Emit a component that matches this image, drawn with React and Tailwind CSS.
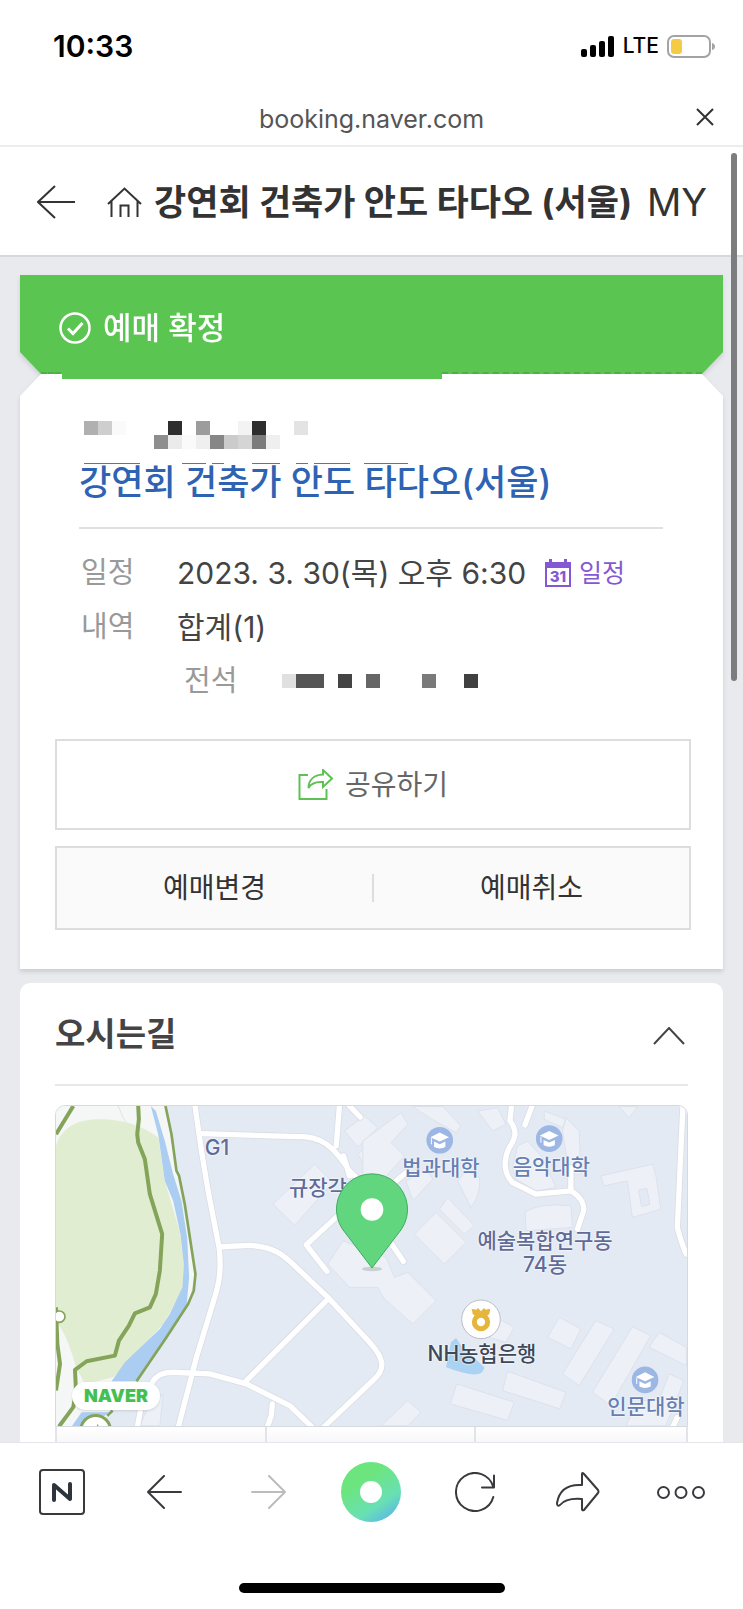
const GRAD_ICONS = [
  { x: 1171, y: 148 },
  { x: 1500, y: 143 },
  { x: 1788, y: 868 },
];

const MAP_LABELS = [
  { text: 'G1', className: 'left-[25.5%] top-[13%] text-[#5f6b99]' },
  { text: '규장각', className: 'left-[41.5%] top-[25.5%] text-[#5f6b99]' },
  { text: '법과대학', className: 'left-[61%] top-[19.5%] text-[#6680b3]' },
  { text: '음악대학', className: 'left-[78.5%] top-[19%] text-[#6680b3]' },
  { text: '예술복합연구동', className: 'left-[77.5%] top-[42%] text-[#5f6b99]' },
  { text: '74동', className: 'left-[77.5%] top-[49.5%] text-[#5f6b99]' },
  { text: 'NH농협은행', className: 'left-[67.5%] top-[77.5%] text-[#3c4858]' },
  { text: '인문대학', className: 'left-[93.5%] top-[94%] text-[#6680b3]' },
];

// null keeps the cell empty
const NAME_MOSAIC = [
  ['bg-[#b0b0b0]', 'bg-[#cecece]', 'bg-[#fafafa]', null, null, null, 'bg-[#2e2e2e]', null, 'bg-[#9c9c9c]', null, null, 'bg-[#f3f3f3]', 'bg-[#2e2e2e]', null, null, 'bg-[#e3e3e3]'],
  [null, null, null, null, null, 'bg-[#8e8e8e]', 'bg-[#ebebeb]', 'bg-[#fafafa]', 'bg-[#efefef]', 'bg-[#868686]', 'bg-[#cbcbcb]', 'bg-[#d5d5d5]', 'bg-[#7c7c7c]', 'bg-[#efefef]', null, null],
];

const SEAT_MOSAIC = [
  ['bg-[#e0e0e0]', 'bg-[#555555]', 'bg-[#555555]', null, 'bg-[#444444]', null, 'bg-[#666666]', null, null, null, 'bg-[#7a7a7a]', null, null, 'bg-[#404040]'],
];

const Mosaic = ({ rows }) => (
  <div aria-hidden="true">
    {rows.map((row, i) => (
      <div key={i} className="flex">
        {row.map((cell, j) => (
          <span key={j} className={`h-[14px] w-[14px] ${cell || ''}`} />
        ))}
      </div>
    ))}
  </div>
);

const StatusBar = () => (
  <div className="flex h-[92px] items-center justify-between pl-[53px] pr-[28px]">
    <time className="text-[30px] leading-8 font-semibold text-black">10:33</time>
    <div className="flex items-center gap-2">
      <svg className="h-[21px] w-[34px]" viewBox="0 0 34 21" aria-hidden="true">
        <rect x="0" y="13" width="6" height="8" rx="2" />
        <rect x="9" y="9" width="6" height="12" rx="2" />
        <rect x="18" y="5" width="6" height="16" rx="2" />
        <rect x="27" y="0" width="6" height="21" rx="2" />
      </svg>
      <span className="text-[21px] leading-8 font-medium text-black">LTE</span>
      <svg className="h-[23px] w-12" viewBox="0 0 48 23" aria-hidden="true">
        <rect x="1" y="1" width="42" height="21" rx="6" fill="none" stroke="#a3a3a3" strokeWidth="2" />
        <rect x="4" y="4" width="11" height="15" rx="3" fill="#f3cb45" />
        <path d="M45 8 Q48 9 48 11.5 Q48 14 45 15Z" fill="#a3a3a3" />
      </svg>
    </div>
  </div>
);

const UrlBar = () => (
  <div className="grid h-[55px] grid-cols-[64px_1fr_64px] items-center border-b-2 border-[#ededed]">
    <p className="col-start-2 text-center text-[25px] leading-8 text-[#555555]">booking.naver.com</p>
    <button type="button" aria-label="닫기" className="flex h-full items-center justify-end pr-[29px] pb-1">
      <svg className="h-[18px] w-[18px]" viewBox="0 0 18 18" fill="none" stroke="#333" strokeWidth="2">
        <path d="M1 1 L17 17 M17 1 L1 17" />
      </svg>
    </button>
  </div>
);

const PageHeader = () => (
  <header className="flex h-[110px] items-center border-b-2 border-[#d6d8dc] pt-[2px] pl-[37px] pr-[36px] text-[#333333]">
    <button type="button" aria-label="뒤로" className="mr-8 shrink-0">
      <svg className="h-[34px] w-[38px]" viewBox="0 0 38 34" fill="none" stroke="currentColor" strokeWidth="2">
        <path d="M18 1 L1 17 L18 33 M1 17 H38" />
      </svg>
    </button>
    <a href="#home" aria-label="홈" className="mr-3 shrink-0">
      <svg className="h-[30px] w-[35px]" viewBox="0 0 35 30" fill="none" stroke="currentColor" strokeWidth="2">
        <path d="M1 17 L17.5 1.5 L34 17 M4.5 14 V30 M30.5 14 V30 M13.5 30 V18.5 H21.5 V30" />
      </svg>
    </a>
    <h1 className="truncate text-[35px] leading-[48px] font-bold">강연회 건축가 안도 타다오 (서울)</h1>
    <a href="#my" className="ml-auto text-[38px] leading-[48px]">MY</a>
  </header>
);

const TicketCard = () => (
  <section className="drop-shadow-[0_3px_2px_rgba(120,124,135,0.25)]">
    <div className="relative flex h-[99px] items-center gap-3 bg-[#5bc551] pl-[39px] pt-[6px] text-white [clip-path:polygon(0_0,100%_0,100%_calc(100%-22px),calc(100%-21px)_100%,21px_100%,0_calc(100%-22px))]">
      <svg className="h-8 w-8" viewBox="0 0 32 32" fill="none" stroke="currentColor" strokeWidth="2.5">
        <circle cx="16" cy="16" r="14.5" />
        <path d="M9 16.5 L14 21.5 L23.5 11" strokeWidth="3" />
      </svg>
      <h2 className="text-[31px] leading-[44px] font-medium">예매 확정</h2>
      <span className="absolute left-[21px] bottom-0 w-5 border-b-2 border-dashed border-[#4fae46]" />
      <span className="absolute left-[60%] right-[21px] bottom-0 border-b-2 border-dashed border-[#4fae46]" />
    </div>

    <div className="relative bg-white pl-[35px] pr-8 pt-[47px] pb-[39px] [clip-path:polygon(21px_0,calc(100%-21px)_0,100%_22px,100%_100%,0_100%,0_22px)]">
      <span className="absolute left-[42px] right-[40%] top-0 h-[5px] bg-[#5bc551]" />
      <div className="pl-6 pr-7">
        <div className="pl-[5px]">
          <Mosaic rows={NAME_MOSAIC} />
        </div>
        <div className="mt-[14px] flex pl-[5px]" aria-hidden="true">
          <span className="mr-[42px] h-px w-14 bg-[#5078a8]" />
          <span className="mr-[6px] h-px w-6 bg-[#5078a8]" />
          <span className="mr-7 h-px w-3 bg-[#5078a8]" />
          <span className="mr-4 h-px w-7 bg-[#5078a8]" />
          <span className="mr-[6px] h-px w-3 bg-[#5078a8]" />
          <span className="mr-[14px] h-px w-9 bg-[#5078a8]" />
          <span className="h-px w-11 bg-[#5078a8]" />
        </div>
        <h3 className="border-b-2 border-[#e0e0e0] pb-[27px] text-[35px] leading-9 font-medium text-[#2e63b3]">
          강연회 건축가 안도 타다오(서울)
        </h3>

        <dl className="mt-[17px] text-[29px] leading-[54px] text-[#444444]">
          <div className="flex">
            <dt className="w-[98px] pl-[2px] text-[#999999]">일정</dt>
            <dd className="flex items-center gap-[19px] text-[30px]">
              2023. 3. 30(목) 오후 6:30
              <a href="#calendar" className="flex items-center gap-2 text-[25px] text-[#8558d3]">
                <svg className="h-[28px] w-[26px]" viewBox="0 0 26 28" aria-hidden="true">
                  <path d="M0 3 H4 V0 H7 V3 H19 V0 H22 V3 H26 V28 H0Z" fill="#8558d3" />
                  <rect x="2" y="9" width="22" height="17" fill="#fff" />
                  <text x="13" y="23" textAnchor="middle" fontSize="15" fontWeight="800" fill="#8558d3">31</text>
                </svg>
                일정
              </a>
            </dd>
          </div>
          <div className="flex">
            <dt className="w-[98px] pl-[2px] text-[#999999]">내역</dt>
            <dd className="text-[30px]">합계(1)</dd>
          </div>
          <div className="flex items-center pl-[105px]">
            <dt className="w-[98px] text-[#999999]">전석</dt>
            <dd>
              <Mosaic rows={SEAT_MOSAIC} />
            </dd>
          </div>
        </dl>
      </div>

      <button type="button" className="mt-[31px] flex h-[91px] w-full items-center justify-center gap-3 border-2 border-[#dddddd] text-[28px] leading-10 text-[#666666]">
        <svg className="h-8 w-[35px]" viewBox="0 0 35 32" fill="none" stroke="#5fc154" strokeWidth="2">
          <path d="M10 6 H1.5 V30 H28.5 V20" />
          <path d="M25 1 L34 9.5 L25 18 V13 C18 12.5 13 14 10.5 19 C10.5 11 16 6 25 5.5Z" />
        </svg>
        공유하기
      </button>
      <div className="mt-4 flex h-[84px] items-center border-2 border-[#dddddd] bg-[#fafafa] text-[28px] leading-10 text-[#333333]">
        <button type="button" className="h-full flex-1">예매변경</button>
        <span className="h-7 w-[2px] bg-[#dddddd]" />
        <button type="button" className="h-full flex-1">예매취소</button>
      </div>
    </div>
  </section>
);

const MapDrawing = () => (
  <svg className="block w-full" viewBox="18 45 1896 963" aria-hidden="true">
    <rect x="18" y="45" width="1896" height="963" fill="#e4eaf4" />

    {/* park and stream */}
    <path d="M18 45 H347 L380 240 437 550 415 640 260 872 172 975 140 1008 H18Z" fill="#f5f6f6" />
    <path d="M205 45 Q215 80 240 110" fill="none" stroke="#e0e2e4" strokeWidth="3" />
    <path d="M18 165 C35 110 80 85 150 85 C220 85 280 105 325 140 L345 270 392 430 402 520 398 600 340 700 190 860 L105 880 L78 830 C60 760 40 720 18 690Z" fill="#e1edd1" />
    <path d="M303 45 L325 130 345 270 370 330 392 430 402 520 398 590 360 670 330 715 225 815 185 872 H262 L330 770 410 650 418 560 412 440 395 330 370 250 345 150 318 60Z M65 1008 L95 965 H180 L150 985 100 1008Z" fill="#aacdf1" />
    <g fill="none" stroke="#84a45a" strokeWidth="12" strokeLinejoin="round">
      <path d="M265 45 L267 85 262 130 265 155 285 205 300 310 337 430 330 540 318 610 300 650 255 668 237 705 207 750 195 795 110 812 75 838 78 900 70 950 27 1008" />
      <path d="M70 45 L18 130 M18 650 L22 760 30 820 18 900" />
      <path d="M347 45 L365 130 380 240 388 255 405 340 437 550 432 600 415 640 350 740 260 872 M188 960 L172 976" strokeWidth="8" />
      <circle cx="28" cy="678" r="17" fill="#fff" strokeWidth="5" />
      <circle cx="137" cy="1020" r="45" fill="#fff" strokeWidth="9" />
      <path d="M143 1002 V1008" strokeWidth="4" />
    </g>

    {/* buildings */}
    <g fill="#edf1f7" stroke="#dce1ea" strokeWidth="3">
      <path d="M670 340 L795 220 850 275 735 403Z M885 120 L945 75 985 110 925 168Z M925 190 L990 130 1020 165 960 250Z" />
      <path d="M290 960 L340 910 330 1006 270 1006Z" />
      <path d="M835 520 L880 450 1010 500 1035 560 1075 545 1160 630 1090 700 1005 625 985 590 900 590Z" />
      <g transform="translate(960 0)">
        <path d="M-20 150 L95 65 115 100 65 155 105 195 20 290 -20 260Z M130 47 H220 L275 105 260 125 180 80Z" />
        <path d="M110 270 L170 235 190 265 130 330Z" />
        <path d="M135 430 L200 365 290 455 225 520Z M210 355 L235 320 315 405 285 430Z M265 270 L290 240 330 260 C335 300 320 330 305 350Z" />
        <path d="M468 365 C500 340 560 340 605 345 L610 410 470 420Z" />
        <path d="M695 255 L850 220 860 250 875 355 790 380 775 270 705 285Z" />
        <path d="M808 298 L833 292 843 340 818 348Z" fill="#e4eaf4" />
        <path d="M535 740 L570 680 635 715 605 775Z M580 850 L680 690 735 715 630 885Z M670 905 L790 708 845 735 725 945Z M840 770 L870 725 952 770 V825Z M770 1006 L810 930 H870 L900 850 945 870 890 1006Z" />
        <path d="M243 940 L262 880 435 935 415 990Z M400 900 L415 842 590 905 572 955Z M35 1006 L115 930 155 965 115 1006Z" />
        <path d="M325 60 L385 50 410 100 370 120Z M430 230 L445 165 475 150 520 200 560 290 500 300 440 265Z M590 80 L630 120 635 250 600 250 580 120Z M750 47 H805 L780 80Z M525 60 L590 85 580 110 525 85Z" />
        <path d="M380 680 L435 710 410 755 360 740Z" />
      </g>
    </g>
    <path d="M1190 830 L1205 755 1220 742 1235 765 1305 830 C1300 862 1260 855 1190 830Z" fill="#aad2f2" />

    {/* roads: casing first, then the white line on it */}
    {['#d9dde5', '#ffffff'].map((color, i) => (
      <g key={color} fill="none" stroke={color} strokeWidth={i === 0 ? 21 : 16} strokeLinejoin="round" strokeLinecap="round">
        <path d="M435 40 L455 180 475 300 508 470 C515 530 510 570 495 620 L440 800 385 1012" />
        <path d="M455 128 L770 138 C830 145 860 180 900 240 L960 300 M870 40 L860 165 M882 195 L900 255 M900 45 L932 78" />
        <path d="M515 468 L600 464 C670 468 700 490 740 530 L835 620 960 755 C1005 805 1010 835 970 870 L820 1012" />
        <path d="M835 625 L590 870 M262 1012 L275 940 C310 860 320 845 370 845 L480 850 590 880 720 945 790 1012 M668 940 L665 975 652 1012" />
        <path d="M870 370 L770 462 832 542 M1020 450 L1062 512 M1035 275 L1070 245" />
        <g transform="translate(960 0)">
          <path d="M427 40 L422 90 C445 120 440 140 420 170 C400 210 405 250 430 275 L500 310 605 300 C640 320 650 350 640 370 L625 415 M605 230 V300 M490 40 L467 102" />
          <path d="M942 40 L930 300 925 410 C935 450 940 465 952 490 M925 980 L910 1012" />
        </g>
      </g>
    ))}

    {GRAD_ICONS.map(({ x, y }) => (
      <g key={x} transform={`translate(${x} ${y})`}>
        <circle r="40" fill="#9cb7e4" />
        <path d="M-28 -9 L0 -23 28 -9 0 4Z M-17 4 L0 12 17 4 V20 Q0 29 -17 20Z" fill="#fff" />
        <path d="M-25 -6 V12" stroke="#fff" strokeWidth="3" />
      </g>
    ))}

    <g transform="translate(1295 686)">
      <circle r="58" fill="#fff" stroke="#b9bcc4" strokeWidth="3" />
      <circle cy="8" r="20" fill="none" stroke="#e5b53c" strokeWidth="15" />
      <path d="M-28 -32 L-14 -29 -9 -34 0 -24 9 -34 14 -29 28 -32 25 -16 14 -8 H-14 L-25 -16Z" fill="#e5b53c" />
    </g>
  </svg>
);

const PlaceMarker = () => (
  <svg className="absolute left-1/2 top-[21%] w-[12%] -translate-x-1/2" viewBox="851 245 228 300" aria-hidden="true">
    <ellipse cx="965" cy="534" rx="30" ry="7" fill="#9fb3a8" opacity="0.5" />
    <path d="M965 531 L876 414 A107 107 0 1 1 1054 414Z" fill="#62d67f" stroke="#3fab5e" strokeWidth="3" />
    <circle cx="965" cy="355" r="34" fill="#fff" />
  </svg>
);

const DirectionsCard = () => (
  <section className="mt-[14px] rounded-t-[10px] bg-white px-[35px]">
    <div className="flex h-[103px] items-center justify-between border-b-2 border-[#e8e8e8] pr-[3px]">
      <h2 className="text-[33px] leading-[48px] font-bold text-[#444444]">오시는길</h2>
      <button type="button" aria-label="접기" className="pt-[5px]">
        <svg className="h-[18px] w-8" viewBox="0 0 32 18" fill="none" stroke="#444" strokeWidth="2">
          <path d="M1 17 L16 1 L31 17" />
        </svg>
      </button>
    </div>
    <div className="relative mt-[19px] overflow-hidden rounded-t-[10px] border border-[#d5d9e0]">
      <MapDrawing />
      {MAP_LABELS.map(({ text, className }) => (
        <span
          key={text}
          className={`absolute -translate-x-1/2 -translate-y-1/2 text-[21px] leading-6 font-medium whitespace-nowrap [text-shadow:0_0_2px_#fff,0_0_2px_#fff] ${className}`}
        >
          {text}
        </span>
      ))}
      <PlaceMarker />
      <span className="absolute left-4 bottom-4 rounded-full bg-white px-3 py-[2px] text-[18px] leading-6 font-black text-[#43c050] shadow-sm">
        NAVER
      </span>
    </div>
    <div className="grid h-[15px] grid-cols-3 divide-x-2 divide-[#e3e4e8] border-x-2 border-[#e3e4e8] bg-linear-to-b from-white to-[#f8f8fa]">
      <span />
      <span />
      <span />
    </div>
  </section>
);

const BottomBar = () => (
  <nav className="border-t border-[#e6e6ea] bg-white">
    <div className="grid h-[98px] grid-cols-7 place-items-center px-[10px] text-[#3a3a3e]">
      <button type="button" aria-label="네이버 홈">
        <svg className="h-[46px] w-[46px]" viewBox="0 0 46 46" fill="none" stroke="currentColor" strokeWidth="2">
          <rect x="1" y="1" width="44" height="44" rx="3" />
          <path d="M15 31 V16 L31 30 V15" stroke="#2d343c" strokeWidth="4" strokeLinejoin="round" strokeLinecap="round" />
        </svg>
      </button>
      <button type="button" aria-label="이전">
        <svg className="h-[34px] w-[35px]" viewBox="0 0 35 34" fill="none" stroke="currentColor" strokeWidth="2" strokeLinecap="round" strokeLinejoin="round">
          <path d="M17 1 L1 17 L17 33 M1 17 H34" />
        </svg>
      </button>
      <button type="button" aria-label="다음" className="text-[#bcbcbc]">
        <svg className="h-[34px] w-[35px]" viewBox="0 0 35 34" fill="none" stroke="currentColor" strokeWidth="2" strokeLinecap="round" strokeLinejoin="round">
          <path d="M18 1 L34 17 L18 33 M34 17 H1" />
        </svg>
      </button>
      <button type="button" aria-label="그린닷">
        <svg className="h-[60px] w-[60px]" viewBox="0 0 60 60">
          <defs>
            <linearGradient id="dot" x1="0.25" y1="0.05" x2="0.85" y2="0.95">
              <stop offset="0.25" stopColor="#6ce57f" />
              <stop offset="0.7" stopColor="#69e0b4" />
              <stop offset="1" stopColor="#5cb6e6" />
            </linearGradient>
          </defs>
          <circle cx="30" cy="30" r="30" fill="url(#dot)" />
          <circle cx="30" cy="30" r="11" fill="#fff" />
        </svg>
      </button>
      <button type="button" aria-label="새로고침">
        <svg className="h-10 w-10" viewBox="0 0 40 40" fill="none" stroke="currentColor" strokeWidth="2" strokeLinecap="round" strokeLinejoin="round">
          <path d="M38.3 25 A19 19 0 1 1 38.3 15 M39 3.5 V15.5 H27" />
        </svg>
      </button>
      <button type="button" aria-label="공유">
        <svg className="h-10 w-11" viewBox="0 0 44 40" fill="none" stroke="currentColor" strokeWidth="2" strokeLinecap="round" strokeLinejoin="round">
          <path d="M26 2 Q26 0 28 2 L42 18 Q43 20 42 21 L28 38 Q26 39 26 37 V27 C14 26 8 28 4 33 Q1 35 1 31 C3 19 11 12 26 13Z" />
        </svg>
      </button>
      <button type="button" aria-label="더보기">
        <svg className="h-[13px] w-12" viewBox="0 0 48 13" fill="none" stroke="currentColor" strokeWidth="2">
          <circle cx="6.5" cy="6.5" r="5.5" />
          <circle cx="24" cy="6.5" r="5.5" />
          <circle cx="41.5" cy="6.5" r="5.5" />
        </svg>
      </button>
    </div>
    <div className="flex h-[68px] items-end justify-center pb-4">
      <span className="h-[10px] w-[266px] rounded-full bg-black" />
    </div>
  </nav>
);

const App = () => (
  <div className="relative bg-white font-['Inter','Noto_Sans_CJK_KR',sans-serif]">
    <StatusBar />
    <UrlBar />
    <PageHeader />
    <main className="bg-[#e9eaee] px-5 pt-[18px]">
      <TicketCard />
      <DirectionsCard />
    </main>
    <BottomBar />
    <span className="absolute right-[6px] top-[153px] h-[528px] w-[6px] rounded-full bg-[#7c7d7f]" />
  </div>
);

export default App;
